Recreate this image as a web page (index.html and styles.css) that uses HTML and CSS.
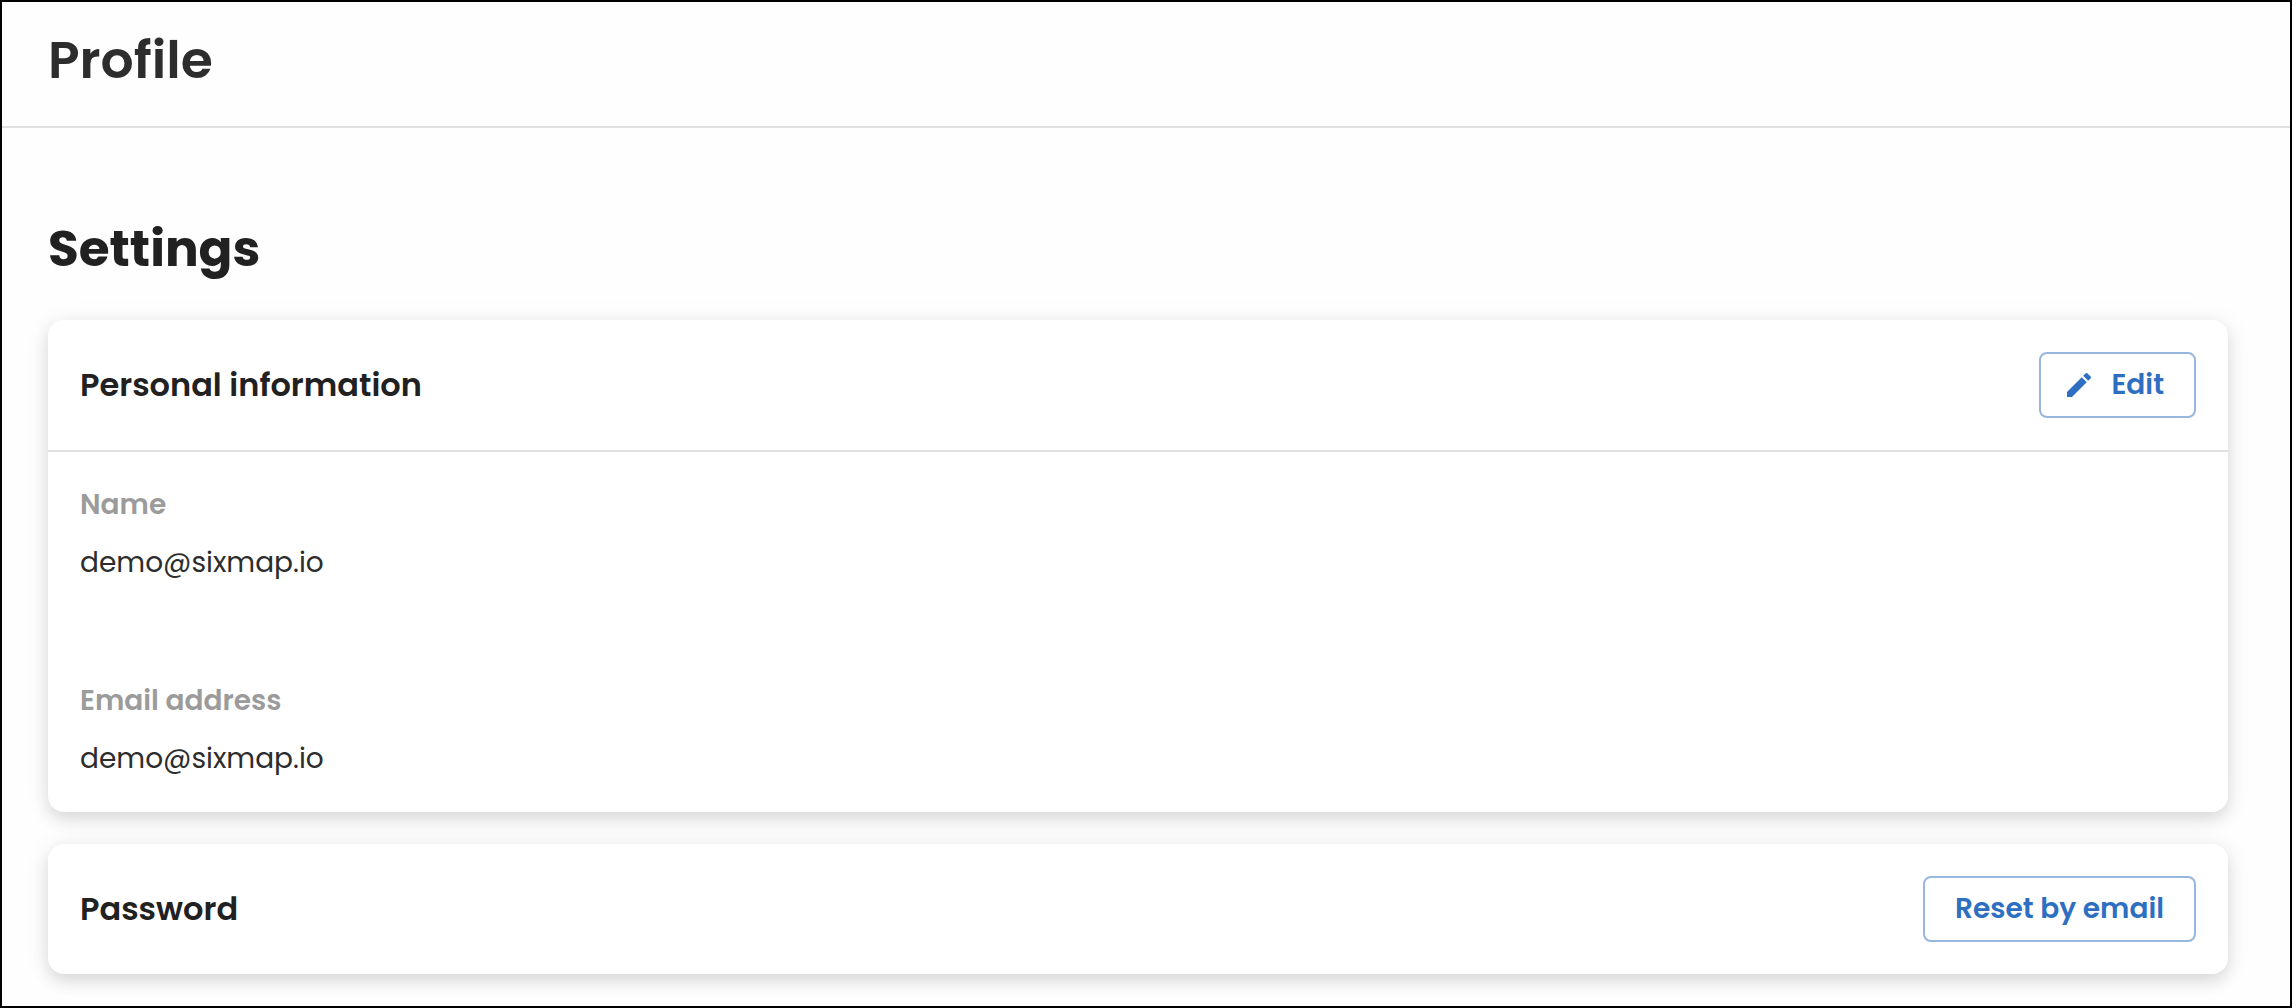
FILE: index.html
```html
<!DOCTYPE html>
<html lang="en">
<head>
    <meta charset="UTF-8">
    <meta name="viewport" content="width=device-width, initial-scale=1.0">
    <title>Profile</title>
    <link rel="stylesheet" href="styles.css">
</head>
<body>
    <header class="page-header">
        <h1>Profile</h1>
    </header>

    <main class="content">
        <h2>Settings</h2>

        <section class="card">
            <div class="card-header">
                <h3>Personal information</h3>
                <button type="button" class="btn">
                    <svg class="btn-icon" viewBox="0 0 24 24" aria-hidden="true">
                        <path d="M3 17.25V21h3.75L17.81 9.94l-3.75-3.75L3 17.25zM20.71 7.04c.39-.39.39-1.02 0-1.41l-2.34-2.34c-.39-.39-1.02-.39-1.41 0l-1.83 1.83 3.75 3.75 1.83-1.83z"/>
                    </svg>
                    Edit
                </button>
            </div>
            <dl class="card-body">
                <div class="field">
                    <dt>Name</dt>
                    <dd>demo@sixmap.io</dd>
                </div>
                <div class="field">
                    <dt>Email address</dt>
                    <dd>demo@sixmap.io</dd>
                </div>
            </dl>
        </section>

        <section class="card">
            <div class="card-header">
                <h3>Password</h3>
                <button type="button" class="btn">Reset by email</button>
            </div>
        </section>
    </main>
</body>
</html>
```
FILE: styles.css
```css
* {
    margin: 0;
    padding: 0;
    box-sizing: border-box;
    font-family: 'Poppins', 'Inter', sans-serif;
}

body {
    min-height: 100vh;
    background: #fefefe;
    border: 2px solid #000;
    color: #2d2d2d;
}

.page-header {
    padding: 22px 46px 30px;
    border-bottom: 2px solid #e0e0e0;
}

h1 {
    font-size: 52px;
    line-height: 72px;
    font-weight: 600;
}

.content {
    padding: 85px 62px 32px 46px;
}

h2 {
    margin-bottom: 35px;
    font-size: 50px;
    line-height: 72px;
    font-weight: 700;
    color: #212121;
}

.card {
    background: #fff;
    border-radius: 16px;
    box-shadow: 0 8px 16px rgba(0, 0, 0, 0.1), 0 2px 24px rgba(0, 0, 0, 0.08);
}

.card + .card {
    margin-top: 32px;
}

.card-header {
    display: flex;
    justify-content: space-between;
    align-items: center;
    padding: 32px;
}

h3 {
    font-size: 32px;
    line-height: 48px;
    font-weight: 600;
    color: #212121;
}

.card-body {
    display: flex;
    flex-direction: column;
    gap: 96px;
    padding: 32px;
    border-top: 2px solid #e0e0e0;
}

.field {
    display: flex;
    flex-direction: column;
    gap: 16px;
    font-size: 28px;
    line-height: 42px;
}

dt {
    font-weight: 600;
    color: #9b9b9b;
}

.btn {
    display: flex;
    align-items: center;
    height: 66px;
    padding: 0 30px;
    background: transparent;
    border: 2px solid #97b6e0;
    border-radius: 8px;
    font-size: 28px;
    font-weight: 600;
    color: #2e6fc1;
    cursor: pointer;
}

.btn:hover {
    background: #f3f7fc;
}

.btn-icon {
    width: 32px;
    height: 32px;
    margin-left: -8px;
    margin-right: 16px;
    fill: currentColor;
}
```
